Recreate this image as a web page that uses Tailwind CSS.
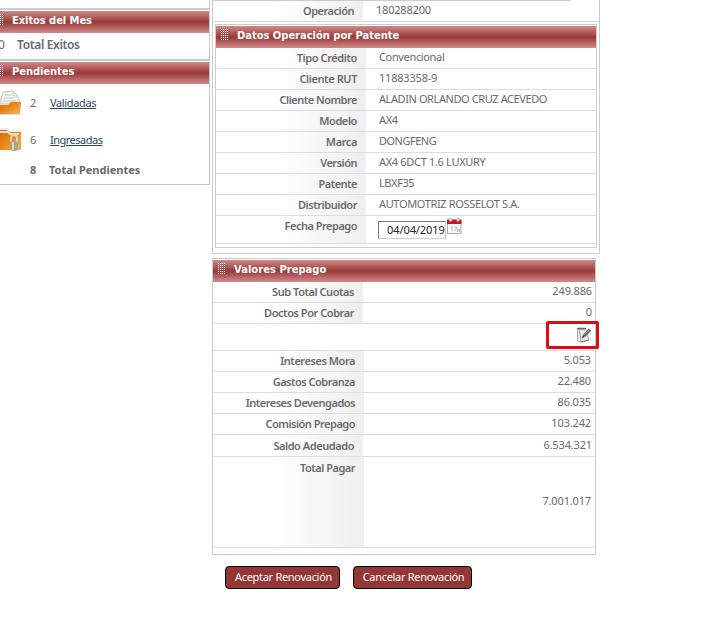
<!DOCTYPE html>
<html lang="es">
<head>
<meta charset="utf-8">
<title>Renovación</title>
<script src="https://cdn.jsdelivr.net/npm/@tailwindcss/browser@4"></script>
</head>
<body class="bg-white">
<svg width="0" height="0" class="absolute">
  <defs><pattern id="dots" width="2" height="2" patternUnits="userSpaceOnUse"><rect width="1" height="1" fill="#fff"/></pattern></defs>
</svg>
<div class="flex h-[619px] w-[728px] items-start overflow-hidden bg-white font-['Noto_Sans','Open_Sans',sans-serif] text-[11px] leading-[14px] text-[#6a6a6a]">

  <aside class="h-[185px] w-[210px] shrink-0 border-r border-b border-[#c8c8c8]">
    <div class="h-[8px]"></div>
    <h2 class="flex h-[25px] items-center border-t-2 border-[#ccc] bg-white pt-px">
      <span class="flex h-[22px] w-full items-center bg-linear-to-b from-[#d08a8a] via-[#993838] to-[#d08a8a] pb-[2px] font-['DejaVu_Sans',sans-serif] text-[10px] font-bold text-white"><svg class="mb-1 w-[4px]" height="11"><rect width="4" height="11" fill="url(#dots)"/></svg><span class="ml-[8px] tracking-[-0.1px]">Exitos del Mes</span></span>
    </h2>
    <div class="flex h-[26px] pt-[5px] text-[12px] font-semibold"><span class="-ml-[2px] w-[19px] font-normal">0</span><span class="tracking-[-0.35px]">Total Exitos</span></div>
    <h2 class="flex h-[25px] items-center border-t-2 border-[#ccc] bg-white pt-px">
      <span class="flex h-[22px] w-full items-center bg-linear-to-b from-[#d08a8a] via-[#993838] to-[#d08a8a] pb-[2px] font-['DejaVu_Sans',sans-serif] text-[10px] font-bold text-white"><svg class="mb-1 w-[4px]" height="11"><rect width="4" height="11" fill="url(#dots)"/></svg><span class="ml-[8px] tracking-[-0.1px]">Pendientes</span></span>
    </h2>
    <div class="flex h-[38px] items-center">
      <svg width="22" height="26" viewBox="0 0 22 26">
        <defs><linearGradient id="folder" x1="0" y1="0" x2="1" y2="1"><stop offset="0" stop-color="#c96c0c"/><stop offset=".5" stop-color="#ec8a1c"/><stop offset="1" stop-color="#f7b45e"/></linearGradient></defs>
        <path d="M0 13l3-11 10-1 5 5 2 8H0z" fill="#f1f1f1" stroke="#c4c4c4"/><path d="M13 1v5h5M5 5h6M4 8h10M3 11h13" fill="none" stroke="#ccc"/>
        <path d="M0 15h8l3-3h10l-1 12H0z" fill="url(#folder)"/><path d="M0 24.500h20" stroke="#ddd"/>
      </svg>
      <span class="ml-[8px] w-[20px]">2</span><a class="tracking-[-0.35px] text-[#1f4a66] underline">Validadas</a>
    </div>
    <div class="flex h-[36px] items-center">
      <svg width="22" height="28" viewBox="0 0 22 28">
        <path d="M0 2h8l2 3h11v5H0z" fill="#eee"/><path d="M0 4h7l2 2h12v18H0z" fill="url(#folder)"/><path d="M0 6h8l2 2h9" stroke="#fff" stroke-width="1.500" fill="none"/>
        <path d="M11 16v-3q0-4 3-4t3 4v3" fill="none" stroke="#d9d4c8" stroke-width="2"/><rect x="10" y="15" width="8" height="10" rx="3" fill="#aaa388"/><path d="M13 16v8" stroke="#ddd9c5" stroke-width="2"/>
      </svg>
      <span class="ml-[8px] w-[20px]">6</span><a class="tracking-[-0.5px] text-[#1f4a66] underline">Ingresadas</a>
    </div>
    <div class="flex h-[24px] items-center pl-[30px] font-bold"><span class="w-[19px]">8</span><span>Total Pendientes</span></div>
  </aside>

  <main class="ml-[2px] w-[388px]">
    <section class="h-[254px] border-r border-b border-l border-[#ccc]">
      <div class="h-px w-[358px] bg-[#ccc]"></div>
      <div class="flex h-[21px] border-b border-[#ddd]">
        <div class="w-[150px] bg-linear-to-r from-white from-40% to-[#efefef] pt-[3px] pr-[9px] text-right font-semibold tracking-[-0.5px]">Operación</div>
        <div class="pt-[2px] pl-[13px] tracking-[-0.2px]">180288200</div>
      </div>
      <div class="mt-[2px] ml-[2px] h-[224px] w-[382px] border border-[#ccc] pt-px">
        <h2 class="flex h-[22px] items-center bg-linear-to-b from-[#d08a8a] via-[#993838] to-[#d08a8a] pb-[2px] font-['DejaVu_Sans',sans-serif] text-[10px] font-bold text-white"><svg class="mb-1 ml-[5px] w-[8px]" height="11"><rect width="8" height="11" fill="url(#dots)"/></svg><span class="ml-[8px] tracking-[-0.05px]">Datos Operación por Patente</span></h2>
        <div class="flex h-[21px] border-b border-[#ddd]"><div class="w-[150px] bg-linear-to-r from-white from-40% to-[#efefef] pt-[3px] pr-[9px] text-right font-semibold tracking-[-0.4px]">Tipo Crédito</div><div class="pt-[2px] pl-[13px] tracking-[-0.35px]">Convencional</div></div>
        <div class="flex h-[21px] border-b border-[#ddd]"><div class="w-[150px] bg-linear-to-r from-white from-40% to-[#efefef] pt-[3px] pr-[9px] text-right font-semibold tracking-[-0.4px]">Cliente RUT</div><div class="pt-[2px] pl-[13px] tracking-[-0.2px]">11883358-9</div></div>
        <div class="flex h-[21px] border-b border-[#ddd]"><div class="w-[150px] bg-linear-to-r from-white from-40% to-[#efefef] pt-[3px] pr-[9px] text-right font-semibold tracking-[-0.5px]">Cliente Nombre</div><div class="pt-[2px] pl-[13px] tracking-[-0.41px]">ALADIN ORLANDO CRUZ ACEVEDO</div></div>
        <div class="flex h-[21px] border-b border-[#ddd]"><div class="w-[150px] bg-linear-to-r from-white from-40% to-[#efefef] pt-[3px] pr-[9px] text-right font-semibold tracking-[-0.4px]">Modelo</div><div class="pt-[2px] pl-[13px] tracking-[-0.3px]">AX4</div></div>
        <div class="flex h-[21px] border-b border-[#ddd]"><div class="w-[150px] bg-linear-to-r from-white from-40% to-[#efefef] pt-[3px] pr-[9px] text-right font-semibold tracking-[-0.4px]">Marca</div><div class="pt-[2px] pl-[13px] tracking-[-0.5px]">DONGFENG</div></div>
        <div class="flex h-[21px] border-b border-[#ddd]"><div class="w-[150px] bg-linear-to-r from-white from-40% to-[#efefef] pt-[3px] pr-[9px] text-right font-semibold tracking-[-0.5px]">Versión</div><div class="pt-[2px] pl-[13px] tracking-[-0.32px]">AX4 6DCT 1.6 LUXURY</div></div>
        <div class="flex h-[21px] border-b border-[#ddd]"><div class="w-[150px] bg-linear-to-r from-white from-40% to-[#efefef] pt-[3px] pr-[9px] text-right font-semibold tracking-[-0.5px]">Patente</div><div class="pt-[2px] pl-[13px] tracking-[-0.4px]">LBXF35</div></div>
        <div class="flex h-[21px] border-b border-[#ddd]"><div class="w-[150px] bg-linear-to-r from-white from-40% to-[#efefef] pt-[3px] pr-[9px] text-right font-semibold tracking-[-0.45px]">Distribuidor</div><div class="pt-[2px] pl-[13px] tracking-[-0.35px]">AUTOMOTRIZ ROSSELOT S.A.</div></div>
        <div class="flex h-[28px] border-b border-[#ddd]"><div class="w-[150px] bg-linear-to-r from-white from-40% to-[#efefef] pt-[3px] pr-[9px] text-right font-semibold tracking-[-0.5px]">Fecha Prepago</div>
          <div class="flex items-start pl-[12px]">
            <div class="mt-[5px] h-[18px] w-[68px] border border-[#ccc] border-t-[#777] border-l-[#777] pt-px pl-[8px] tracking-[-0.08px] whitespace-nowrap text-[#222]">04/04/2019</div>
            <svg class="mt-[2px] ml-px" width="15" height="17" viewBox="0 0 15 17"><rect x=".5" y="2.500" width="13.500" height="13" fill="#f7f7f7" stroke="#aaa"/><path d="M0 1.500h14.500v4.500H0z" fill="#cf1518"/><circle cx="3.500" cy="2" r="1.500" fill="#fff" stroke="#b66" stroke-width=".6"/><circle cx="11" cy="2" r="1.500" fill="#fff" stroke="#b66" stroke-width=".6"/><path d="M4 9l1-.5V13M7 9h3l-2 4M10.500 11.500h2v2h-2z" fill="none" stroke="#aaa" stroke-width=".8"/></svg>
          </div></div>
      </div>
    </section>

    <section class="mt-[4px] h-[297px] w-[384px] border border-[#ccc] pt-px">
      <h2 class="flex h-[22px] items-center bg-linear-to-b from-[#d08a8a] via-[#993838] to-[#d08a8a] pb-[2px] font-['DejaVu_Sans',sans-serif] text-[10px] font-bold text-white"><svg class="mb-1 ml-[5px] w-[8px]" height="11"><rect width="8" height="11" fill="url(#dots)"/></svg><span class="ml-[8px]">Valores Prepago</span></h2>
      <div class="flex h-[21px] justify-between border-b border-[#ddd]"><div class="w-[150px] bg-linear-to-r from-white from-40% to-[#efefef] pt-[3px] pr-[9px] text-right font-semibold tracking-[-0.45px]">Sub Total Cuotas</div><div class="pt-[2px] pr-[3px] tracking-[-0.15px]">249.886</div></div>
      <div class="flex h-[21px] justify-between border-b border-[#ddd]"><div class="w-[150px] bg-linear-to-r from-white from-40% to-[#efefef] pt-[3px] pr-[9px] text-right font-semibold tracking-[-0.45px]">Doctos Por Cobrar</div><div class="pt-[2px] pr-[3px]">0</div></div>
      <div class="relative flex h-[27px] justify-end border-b border-[#ddd]">
        <div class="absolute top-[-3px] -right-[4px] h-[28px] w-[53px] rounded-[2px] border-[3px] border-[#df0b12]"></div>
        <svg class="mt-[3px] mr-[3px]" width="16" height="17" viewBox="0 0 16 17"><path d="M1.500 2.500L11 3l1.500 10-8 2-3-1z" fill="#ededed" stroke="#aaa"/><path d="M1 1.500h9" stroke="#666" stroke-width="1.500"/><path d="M3.500 4l1.500 10.500" stroke="#999"/><path d="M5 15l8-2" stroke="#777"/><path d="M8 9L14 2.500" stroke="#666" stroke-width="3.200"/><path d="M5.500 11.500l1.500-3.500 2 2z" fill="#444"/><path d="M8.500 7.500l5-5.500" stroke="#aaa"/></svg>
      </div>
      <div class="flex h-[21px] justify-between border-b border-[#ddd]"><div class="w-[151px] bg-linear-to-r from-white from-40% to-[#efefef] pt-[3px] pr-[9px] text-right font-semibold tracking-[-0.45px]">Intereses Mora</div><div class="pt-[2px] pr-[4px] tracking-[-0.15px]">5.053</div></div>
      <div class="flex h-[21px] justify-between border-b border-[#ddd]"><div class="w-[151px] bg-linear-to-r from-white from-40% to-[#efefef] pt-[3px] pr-[9px] text-right font-semibold tracking-[-0.5px]">Gastos Cobranza</div><div class="pt-[2px] pr-[4px] tracking-[-0.15px]">22.480</div></div>
      <div class="flex h-[21px] justify-between border-b border-[#ddd]"><div class="w-[151px] bg-linear-to-r from-white from-40% to-[#efefef] pt-[3px] pr-[9px] text-right font-semibold tracking-[-0.5px]">Intereses Devengados</div><div class="pt-[2px] pr-[4px] tracking-[-0.15px]">86.035</div></div>
      <div class="flex h-[21px] justify-between border-b border-[#ddd]"><div class="w-[151px] bg-linear-to-r from-white from-40% to-[#efefef] pt-[3px] pr-[9px] text-right font-semibold tracking-[-0.5px]">Comisión Prepago</div><div class="pt-[2px] pr-[4px] tracking-[-0.15px]">103.242</div></div>
      <div class="flex h-[22px] justify-between border-b border-[#ddd]"><div class="w-[150px] bg-linear-to-r from-white from-40% to-[#efefef] pt-[4px] pr-[9px] text-right font-semibold tracking-[-0.45px]">Saldo Adeudado</div><div class="pt-[3px] pr-[3px] tracking-[-0.15px]">6.534.321</div></div>
      <div class="flex h-[91px] items-center justify-between border-b border-[#ddd]"><div class="h-full w-[151px] bg-linear-to-r from-white from-40% to-[#efefef] pt-[4px] pr-[9px] text-right font-semibold tracking-[-0.5px]">Total Pagar</div><div class="pr-[4px] pb-[2px] tracking-[-0.15px]">7.001.017</div></div>
    </section>
    <div class="mt-[11px] ml-[13px] flex gap-[13px] tracking-[-0.3px] text-white">
      <button class="h-[23px] w-[115px] rounded-[4px] border border-black bg-[#943634] pb-[2px] pl-[2px] whitespace-nowrap">Aceptar Renovación</button>
      <button class="h-[23px] w-[119px] rounded-[4px] border border-black bg-[#943634] pb-[2px] pl-[2px] whitespace-nowrap">Cancelar Renovación</button>
    </div>
  </main>
</div>
</body>
</html>
